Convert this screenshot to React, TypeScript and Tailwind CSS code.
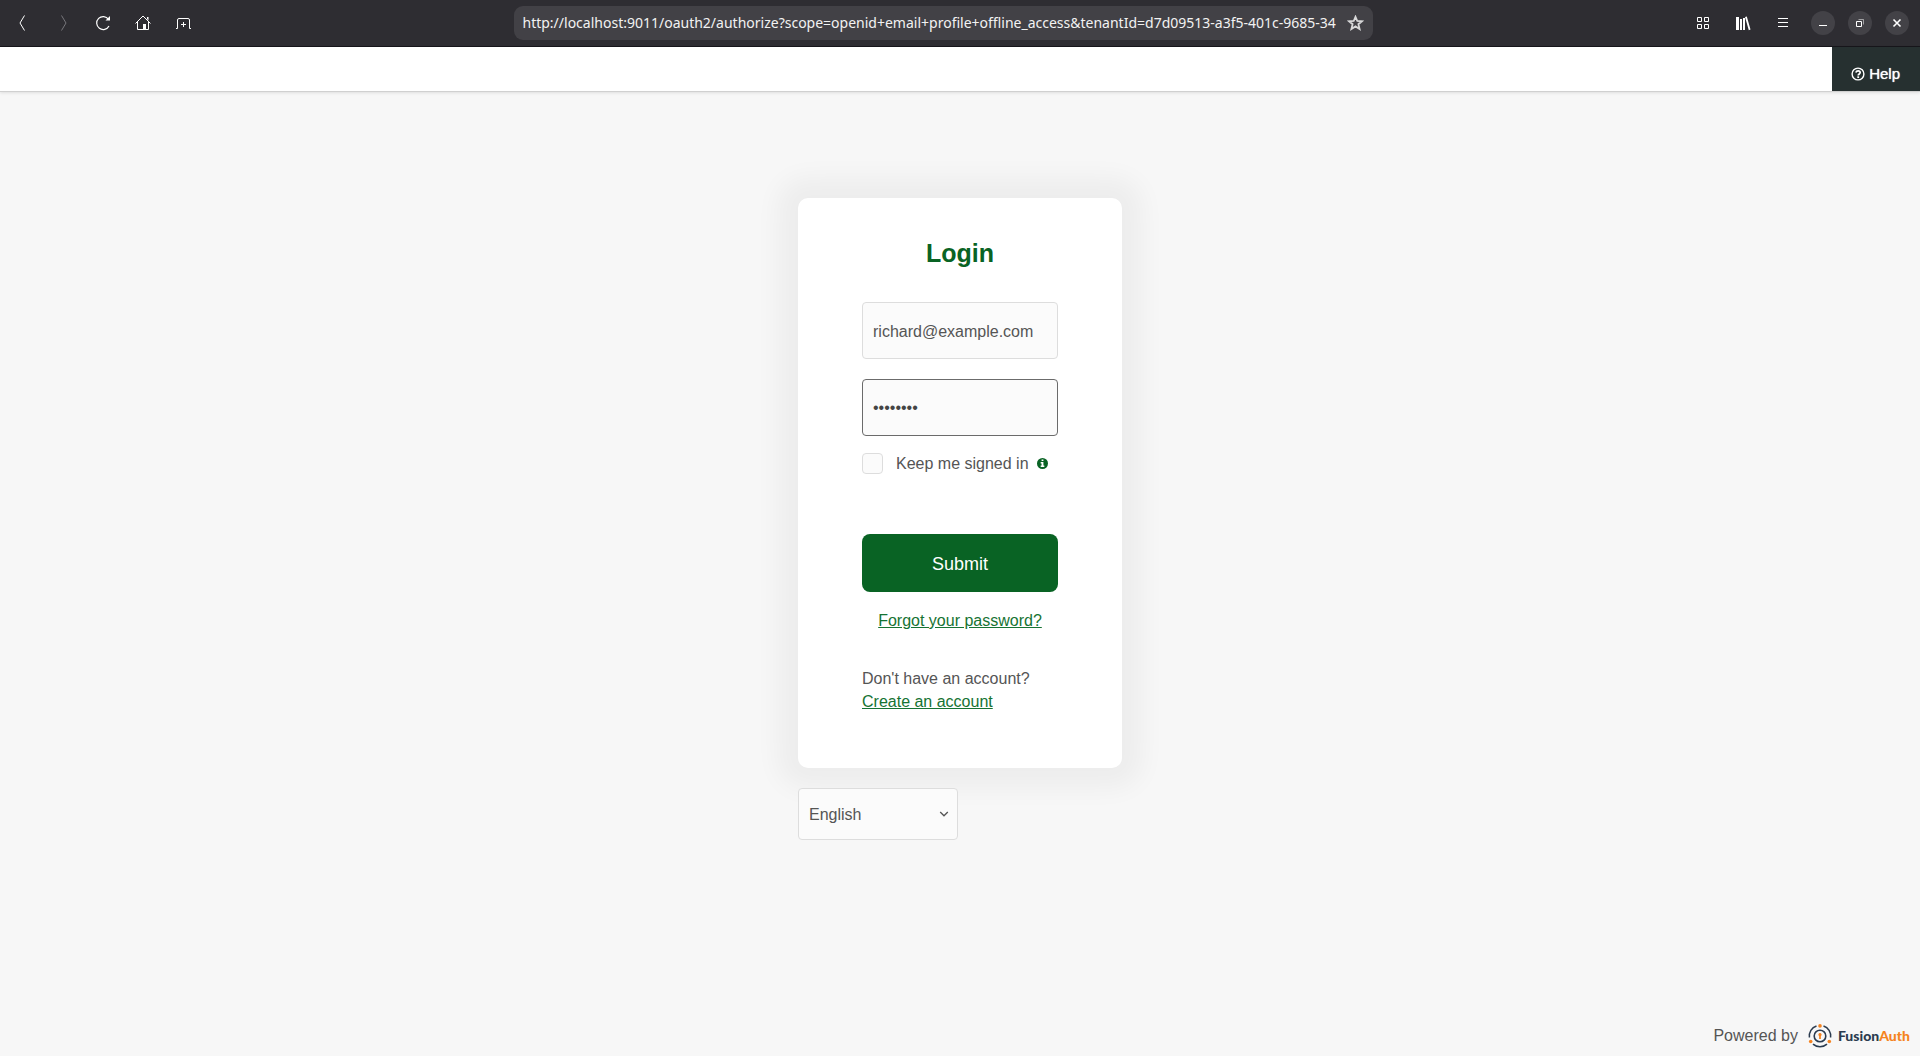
import React from "react";

const pageUrl =
  "http://localhost:9011/oauth2/authorize?scope=openid+email+profile+offline_access&tenantId=d7d09513-a3f5-401c-9685-34";

function ToolButton({
  label,
  disabled,
  children,
}: {
  label: string;
  disabled?: boolean;
  children: React.ReactNode;
}) {
  return (
    <button
      type="button"
      aria-label={label}
      disabled={disabled}
      className="flex size-10 items-center justify-center text-white disabled:text-[#77767b]"
    >
      <svg width="16" height="16" viewBox="0 0 16 16" fill="none" stroke="currentColor">
        {children}
      </svg>
    </button>
  );
}

function WindowButton({ label, children }: { label: string; children: React.ReactNode }) {
  return (
    <button
      type="button"
      aria-label={label}
      className="flex size-6 items-center justify-center rounded-full bg-[#434247] text-white"
    >
      <svg width="16" height="16" viewBox="0 0 16 16" fill="none" stroke="currentColor">
        {children}
      </svg>
    </button>
  );
}

function BrowserBar() {
  return (
    <div className="flex h-[47px] items-center border-b border-[#17161b] bg-[#2e2d32]">
      <nav aria-label="Browser" className="flex pl-[3px]">
        <ToolButton label="Back">
          <path d="M9.500 0.500L5 8l4.500 7.500" strokeWidth="1" />
        </ToolButton>
        <ToolButton label="Forward" disabled>
          <path d="M6.500 0.500L11 8l-4.500 7.500" strokeWidth="1" />
        </ToolButton>
        <ToolButton label="Reload">
          <path d="M13.500 4.300A6.500 6.500 0 1 0 14 11" strokeWidth="1.200" />
          <path d="M15 1v4.500h-4.500z" fill="currentColor" stroke="none" />
        </ToolButton>
        <ToolButton label="Home">
          <path d="M0.500 8.500L8 1l7.500 7.500M2.500 7v7.500h11V7" strokeWidth="1" />
          <path d="M12 2h1.500v3.500l-1.500-1.500zM8 9h3v5.500H8z" fill="currentColor" stroke="none" />
        </ToolButton>
        <ToolButton label="New tab">
          <path d="M1 13.500h1.500v-8.500a1.500 1.500 0 0 1 1.500-1.500h9a1.500 1.500 0 0 1 1.500 1.500v8.500h1.500" />
          <path d="M8.500 7v5M6 9.500h5" />
        </ToolButton>
      </nav>

      <div className="flex flex-1 justify-center">
        <div className="flex h-[34px] w-full max-w-[859px] items-center rounded-[9px] bg-[#424146] pr-[9px] pl-[9px]">
          <input
            aria-label="Address"
            readOnly
            defaultValue={pageUrl}
            className="min-w-0 flex-1 bg-transparent pb-0.5 font-['Noto_Sans',sans-serif] text-[14px] text-[#f2f2f2] outline-none"
          />
          <button type="button" aria-label="Bookmark this page" className="ml-1.5 text-[#d8d8d9]">
            <svg width="17" height="16" viewBox="0 0 17 16" fill="none" stroke="currentColor" strokeWidth="1.800">
              <path d="M8.500 1.800l1.800 4.200 4.600.300-3.500 2.900 1.200 4.800-4.100-2.600L4.400 14l1.200-4.800-3.500-2.900 4.600-.300z" />
            </svg>
          </button>
        </div>
      </div>

      <div className="flex items-center pr-[11px]">
        <ToolButton label="Overview">
          <path d="M2.500 2.500h4v4h-4zM9.500 2.500h4v4h-4zM2.500 9.500h4v4h-4zM9.500 9.500h4v4h-4z" />
        </ToolButton>
        <ToolButton label="Library">
          <path d="M1 2h3v13H1zM5 4h2v11H5zM8 3h2v12H8zM10 2l1.800-.600L15.500 14.600l-1.700.600z" fill="currentColor" stroke="none" />
        </ToolButton>
        <ToolButton label="Menu">
          <path d="M3 3.500h10M3 7.500h10M3 11.500h10" />
        </ToolButton>
        <div className="ml-2 flex gap-[13px]">
          <WindowButton label="Minimize">
            <path d="M4 10.500h8" />
          </WindowButton>
          <WindowButton label="Restore">
            <path d="M4.500 6.500h5v5h-5z" />
            <path d="M6.500 4.500h5v5" opacity="0.5" />
          </WindowButton>
          <WindowButton label="Close">
            <path d="M4.500 4.500l7 7M11.500 4.500l-7 7" strokeWidth="1.600" />
          </WindowButton>
        </div>
      </div>
    </div>
  );
}

function HelpIcon() {
  return (
    <svg width="14" height="14" viewBox="0 0 14 14" fill="none" stroke="currentColor" aria-hidden="true">
      <circle cx="7" cy="7" r="5.900" strokeWidth="1.400" />
      <path d="M4.800 5.500C5.300 4.300 6.100 3.900 7.100 3.900c1.100 0 2.100.700 2.100 1.700C9.200 7 7.200 6.900 7.200 8.500" strokeWidth="1.700" />
      <path d="M6.300 9.300h1.800v1.700H6.300z" fill="currentColor" stroke="none" />
    </svg>
  );
}

function InfoIcon() {
  return (
    <svg width="11" height="11" viewBox="0 0 12 12" aria-hidden="true" className="ml-2 text-[#096324]">
      <circle cx="6" cy="6" r="6" fill="currentColor" />
      <path d="M5 1.500h2v1.700H5zM4 4.300h3v3.900h1v1.700H4V8.200h1V6H4z" fill="#ffffff" />
    </svg>
  );
}

function FusionAuthLogo() {
  return (
    <span className="flex items-center gap-1.5">
      <svg width="24" height="24" viewBox="0 0 24 24" fill="none" aria-hidden="true">
        <g stroke="#2b3b4f" strokeWidth="1.500">
          <path d="M8.500 2A10.600 10.600 0 0 0 1.400 13.500" />
          <path d="M15.500 2a10.600 10.600 0 0 1 7.100 11.500" />
          <path d="M5 20.100a10.600 10.600 0 0 0 14 0" />
          <circle cx="12" cy="12" r="5.800" strokeWidth="1.600" />
        </g>
        <g fill="#f58320">
          <circle cx="12" cy="1.900" r="1.800" />
          <circle cx="2.700" cy="17.500" r="1.800" />
          <circle cx="21.300" cy="17.500" r="1.800" />
          <path d="M12 9a1.700 1.700 0 0 1 .900 3.100V15h-1.800v-2.900A1.700 1.700 0 0 1 12 9z" />
        </g>
      </svg>
      <span className="font-['Lato',sans-serif] text-[14px] leading-6 font-black text-[#2b3b4f]">
        Fusion<span className="text-[#f58320]">Auth</span>
      </span>
    </span>
  );
}

export default function App() {
  return (
    <div className="flex min-h-screen flex-col bg-[#f7f7f7] font-['Liberation_Sans',Arial,sans-serif] text-base text-[#555555]">
      <BrowserBar />

      <header className="flex h-[45px] justify-end border-b border-[#d0d0d0] bg-white shadow-[0_1px_3px_rgba(0,0,0,0.1)]">
        <a
          href="#help"
          className="flex items-center gap-1 bg-[#263030] pt-2.5 pr-5 pl-[19px] text-[15px] text-white [text-shadow:0_0_1px_#ffffff]"
        >
          <HelpIcon />
          Help
        </a>
      </header>

      <main className="mx-auto mt-[106px] w-full max-w-[324px]">
        <form
          onSubmit={(event) => event.preventDefault()}
          className="flex flex-col rounded-[10px] bg-white px-16 pt-9 pb-[55px] shadow-[0_0_26px_20px_rgba(0,0,0,0.045)]"
        >
          <h1 className="mb-[30px] text-center text-[25px] leading-[38px] font-bold text-[#096324]">Login</h1>
          <input
            type="text"
            aria-label="Email"
            defaultValue="richard@example.com"
            className="h-[57px] w-full rounded border border-[#dddddd] bg-[#fbfbfb] px-2.5 pt-0.5 outline-none"
          />
          <input
            type="password"
            aria-label="Password"
            defaultValue="password"
            className="mt-5 h-[57px] w-full rounded border border-[#6b6b6b] bg-[#fbfbfb] px-2.5 text-[#444444] outline-none"
          />
          <div className="mt-[17px] flex h-[21px] items-center">
            <input
              id="remember"
              type="checkbox"
              className="size-[21px] appearance-none rounded border border-[#dddddd] bg-[#fbfbfb]"
            />
            <label htmlFor="remember" className="ml-[13px]">
              Keep me signed in
            </label>
            <InfoIcon />
          </div>
          <button type="submit" className="mt-15 h-[58px] rounded-lg bg-[#096324] pt-0.5 text-lg text-white">
            Submit
          </button>
          <a href="#forgot" className="mt-[17px] self-center leading-6 text-[#167333] underline">
            Forgot your password?
          </a>
          <p className="mt-[34px] leading-[23px]">
            Don't have an account?
            <br />
            <a href="#register" className="text-[#167333] underline">
              Create an account
            </a>
          </p>
        </form>

        <div className="relative mt-5 w-40">
          <select
            aria-label="Language"
            defaultValue="en"
            className="h-[52px] w-full appearance-none rounded border border-[#dddddd] bg-[#fbfbfb] px-2.5 pt-0.5"
          >
            <option value="en">English</option>
            <option value="fr">Français</option>
            <option value="de">Deutsch</option>
          </select>
          <svg
            width="10"
            height="6"
            viewBox="0 0 10 6"
            fill="none"
            stroke="#555555"
            strokeWidth="1.300"
            className="pointer-events-none absolute top-1/2 right-[9px] -translate-y-1/2"
          >
            <path d="M1.200 1L5 4.800 8.800 1" />
          </svg>
        </div>
      </main>

      <footer className="mt-auto flex items-center justify-end gap-2.5 pr-2.5 pb-2">
        <span className="leading-6">Powered by</span>
        <FusionAuthLogo />
      </footer>
    </div>
  );
}
